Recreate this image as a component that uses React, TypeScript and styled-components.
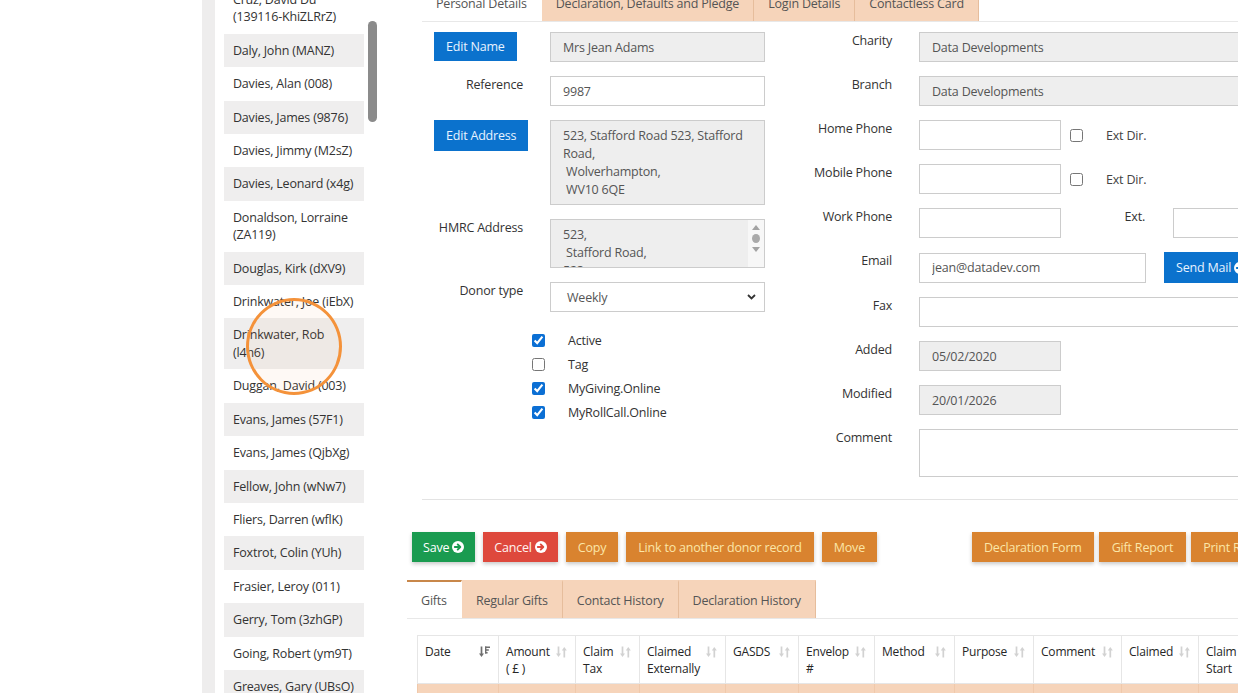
import React from "react";
import styled, { createGlobalStyle } from "styled-components";

const GlobalStyle = createGlobalStyle`
  html, body {
    margin: 0;
    padding: 0;
    background: #ffffff;
  }
  body {
    font-family: "Open Sans", "Liberation Sans", sans-serif;
    font-size: 12.5px;
    letter-spacing: -0.2px;
    color: #333333;
    overflow: hidden;
  }
  * {
    box-sizing: border-box;
  }
`;

const peach = "#f6d4ba";
const peachLine = "#e6bd9c";

const Page = styled.div`
  position: relative;
  display: flex;
  align-items: flex-start;
  width: 1238px;
  height: 693px;
  overflow: hidden;
`;

const BlankSide = styled.div`
  width: 202px;
  flex-shrink: 0;
`;

const Gutter = styled.div`
  width: 13px;
  height: 693px;
  margin-right: 9px;
  flex-shrink: 0;
  background: #eeeded;
`;

const DonorList = styled.ul`
  list-style: none;
  margin: -17px 0 0 0;
  padding: 0;
  width: 140px;
  flex-shrink: 0;
`;

const DonorItem = styled.li<{ $shade: boolean }>`
  padding: 8px 9px;
  line-height: 17.4px;
  white-space: nowrap;
  background: ${(p) => (p.$shade ? "#efeeee" : "#ffffff")};
`;

const ScrollTrack = styled.div`
  width: 9px;
  margin-left: 4px;
  padding-top: 21px;
  flex-shrink: 0;
`;

const ScrollThumb = styled.div`
  height: 101px;
  border-radius: 5px;
  background: #8b8b8b;
`;

const Main = styled.div`
  width: 900px;
  margin-left: 30px;
  flex-shrink: 0;
  display: flex;
  flex-direction: column;
`;

const TabBar = styled.div<{ $inset: number; $top: number }>`
  display: flex;
  height: 39px;
  margin-left: ${(p) => p.$inset}px;
  margin-top: ${(p) => p.$top}px;
  border-bottom: 1px solid #e8e8e8;
`;

const Tab = styled.div<{ $active?: boolean }>`
  display: flex;
  align-items: center;
  padding: 0 14px;
  color: #555555;
  white-space: nowrap;
  background: ${(p) => (p.$active ? "#ffffff" : peach)};
  border-top: 2px solid ${(p) => (p.$active ? "#c8874a" : peach)};
  border-right: 1px solid ${(p) => (p.$active ? "#ffffff" : peachLine)};
`;

const FormPanel = styled.div`
  display: flex;
  margin-left: 15px;
  padding: 10px 0 22px 0;
  border-bottom: 1px solid #e3e3e3;
`;

const Column = styled.div<{ $width: number }>`
  width: ${(p) => p.$width}px;
  flex-shrink: 0;
  display: flex;
  flex-direction: column;
`;

const FieldRow = styled.div<{ $label: number; $last?: boolean }>`
  display: grid;
  grid-template-columns: ${(p) => p.$label}px auto;
  align-items: start;
  margin-bottom: ${(p) => (p.$last ? 0 : 14)}px;
`;

const Label = styled.div`
  padding: 0 27px 0 0;
  line-height: 17px;
  text-align: right;
  color: #333333;
`;

const ButtonCell = styled.div`
  padding-left: 12px;
`;

const Inline = styled.div`
  display: flex;
  align-items: center;
`;

const TextInput = styled.input<{ $width: number; $ro?: boolean }>`
  width: ${(p) => p.$width}px;
  height: 30px;
  margin: 0;
  padding: 0 12px;
  border: 1px solid #cccccc;
  border-radius: 0;
  background: ${(p) => (p.$ro ? "#eeeeee" : "#ffffff")};
  color: #555555;
  font: inherit;
  letter-spacing: inherit;
  outline: none;
`;

const TextBlock = styled.div<{ $width: number; $height: number; $ro?: boolean }>`
  display: flex;
  width: ${(p) => p.$width}px;
  height: ${(p) => p.$height}px;
  border: 1px solid #cccccc;
  background: ${(p) => (p.$ro ? "#eeeeee" : "#ffffff")};
  color: #555555;
  overflow: hidden;
`;

const BlockText = styled.div`
  flex: 1;
  padding: 6px 12px;
  line-height: 18px;
  white-space: pre;
`;

const MiniRail = styled.div`
  width: 16px;
  display: flex;
  flex-direction: column;
  align-items: center;
  padding-top: 5px;
  gap: 4px;
  background: #f7f7f7;
`;

const RailDot = styled.div`
  width: 8px;
  height: 9px;
  border-radius: 50%;
  background: #a9a9a9;
`;

const SelectBox = styled.div`
  display: flex;
  align-items: center;
  justify-content: space-between;
  width: 215px;
  height: 30px;
  padding: 0 8px 0 16px;
  border: 1px solid #cccccc;
  color: #555555;
`;

const CheckList = styled.div`
  display: flex;
  flex-direction: column;
  padding-top: 2px;
`;

const CheckRow = styled.label`
  display: flex;
  align-items: center;
  gap: 23px;
  height: 24px;
  padding-left: 110px;
  color: #333333;
`;

const Check = styled.input.attrs({ type: "checkbox" })<{ $ml?: number }>`
  width: 13px;
  height: 13px;
  margin: 0 0 0 ${(p) => p.$ml ?? 0}px;
  accent-color: #0b6fd4;
`;

const SideText = styled.span<{ $ml: number }>`
  margin-left: ${(p) => p.$ml}px;
  color: #444444;
`;

const ExtLabel = styled.div`
  width: 84px;
  margin-right: 28px;
  align-self: flex-start;
  line-height: 17px;
  text-align: right;
`;

const tones = {
  green: { bg: "#1a9b50", fg: "#ffffff", shadow: true },
  red: { bg: "#de483c", fg: "#fff3f0", shadow: true },
  orange: { bg: "#d9832f", fg: "#fbe6a8", shadow: true },
  blue: { bg: "#0b72cd", fg: "#e8f3ff", shadow: false },
};

type Tone = keyof typeof tones;

const ActionButton = styled.button<{ $tone: Tone; $h?: number; $pad?: number }>`
  display: inline-flex;
  align-items: center;
  gap: 3px;
  height: ${(p) => p.$h ?? 30}px;
  padding: 0 ${(p) => p.$pad ?? 12}px;
  border: none;
  border-radius: 0;
  font: inherit;
  letter-spacing: inherit;
  white-space: nowrap;
  background: ${(p) => tones[p.$tone].bg};
  color: ${(p) => tones[p.$tone].fg};
  box-shadow: ${(p) =>
    tones[p.$tone].shadow ? "0 2px 4px rgba(0, 0, 0, 0.22)" : "none"};
`;

const ButtonBar = styled.div`
  display: flex;
  margin: 32px 0 0 5px;
`;

const ButtonGroup = styled.div<{ $gap: number; $ml?: number }>`
  display: flex;
  gap: ${(p) => p.$gap}px;
  margin-left: ${(p) => p.$ml ?? 0}px;
`;

const GiftTable = styled.table<{ $width: number }>`
  width: ${(p) => p.$width}px;
  margin: 16px 0 0 10px;
  border-collapse: collapse;
  table-layout: fixed;
`;

const TableCol = styled.col<{ $w: number }>`
  width: ${(p) => p.$w}px;
`;

const HeadCell = styled.th`
  height: 48px;
  padding: 7px 8px 6px 7px;
  border: 1px solid #e6e6e6;
  text-align: left;
  vertical-align: top;
  font-weight: normal;
  font-size: 12px;
  line-height: 17px;
  color: #262626;
  overflow: hidden;
`;

const HeadInner = styled.div`
  display: flex;
  justify-content: space-between;
  align-items: flex-start;
  gap: 2px;
`;

const SortGlyph = styled.span`
  padding-top: 3px;
  flex-shrink: 0;
  display: flex;
`;

const DataCell = styled.td`
  height: 34px;
  background: ${peach};
  border-left: 1px solid #f0c9ab;
`;

const CursorRing = styled.div`
  position: absolute;
  left: 246px;
  top: 298px;
  width: 96px;
  height: 97px;
  border: 3.5px solid #f4923a;
  border-radius: 50%;
  background: rgba(244, 160, 90, 0.06);
  pointer-events: none;
`;

const CircleArrow = ({ color }: { color: string }) => (
  <svg width="12" height="12" viewBox="0 0 12 12">
    <circle cx="6" cy="6" r="6" fill="#ffffff" />
    <path
      d="M2.8 6h5.2M5.7 3.4L8.3 6 5.7 8.6"
      stroke={color}
      strokeWidth="1.9"
      fill="none"
      strokeLinecap="round"
      strokeLinejoin="round"
    />
  </svg>
);

const SortIcon = ({ active }: { active?: boolean }) =>
  active ? (
    <svg width="11" height="12" viewBox="0 0 11 12">
      <path d="M2.5 0.5v8" stroke="#6f6f6f" strokeWidth="1.7" />
      <path d="M0 7.5h5L2.5 11z" fill="#6f6f6f" />
      <path d="M6 1.2h5M6 4h3.8M6 6.8h2.6" stroke="#6f6f6f" strokeWidth="1.5" />
      <path d="M6.7 0.5v7" stroke="#6f6f6f" strokeWidth="1.4" />
    </svg>
  ) : (
    <svg width="11" height="12" viewBox="0 0 11 12">
      <path d="M2.5 0.5v8" stroke="#d2d2d2" strokeWidth="1.7" />
      <path d="M0 7.5h5L2.5 11z" fill="#d2d2d2" />
      <path d="M8.3 11.5v-8" stroke="#d2d2d2" strokeWidth="1.7" />
      <path d="M5.8 4.5h5L8.3 1z" fill="#d2d2d2" />
    </svg>
  );

const Chevron = () => (
  <svg width="9" height="6" viewBox="0 0 9 6">
    <path d="M1 1l3.5 3.5L8 1" stroke="#333333" strokeWidth="1.8" fill="none" />
  </svg>
);

const RailArrow = ({ up }: { up?: boolean }) => (
  <svg width="8" height="5" viewBox="0 0 8 5">
    <path d={up ? "M0 5L4 0l4 5z" : "M0 0h8L4 5z"} fill="#a3a3a3" />
  </svg>
);

const donors: string[][] = [
  ["Cruz, David Du", "(139116-KhiZLRrZ)"],
  ["Daly, John (MANZ)"],
  ["Davies, Alan (008)"],
  ["Davies, James (9876)"],
  ["Davies, Jimmy (M2sZ)"],
  ["Davies, Leonard (x4g)"],
  ["Donaldson, Lorraine", "(ZA119)"],
  ["Douglas, Kirk (dXV9)"],
  ["Drinkwater, Joe (iEbX)"],
  ["Drinkwater, Rob", "(l4h6)"],
  ["Duggan, David (003)"],
  ["Evans, James (57F1)"],
  ["Evans, James (QjbXg)"],
  ["Fellow, John (wNw7)"],
  ["Fliers, Darren (wflK)"],
  ["Foxtrot, Colin (YUh)"],
  ["Frasier, Leroy (011)"],
  ["Gerry, Tom (3zhGP)"],
  ["Going, Robert (ym9T)"],
  ["Greaves, Gary (UBsO)"],
];

const giftColumns: { lines: string[]; w: number; active?: boolean }[] = [
  { lines: ["Date"], w: 81, active: true },
  { lines: ["Amount", "( £ )"], w: 77 },
  { lines: ["Claim", "Tax"], w: 64 },
  { lines: ["Claimed", "Externally"], w: 86 },
  { lines: ["GASDS"], w: 73 },
  { lines: ["Envelop", "#"], w: 76 },
  { lines: ["Method"], w: 80 },
  { lines: ["Purpose"], w: 79 },
  { lines: ["Comment"], w: 88 },
  { lines: ["Claimed"], w: 77 },
  { lines: ["Claim", "Start"], w: 80 },
];

const tableWidth = giftColumns.reduce((s, c) => s + c.w, 0);

const checks = [
  { label: "Active", on: true },
  { label: "Tag", on: false },
  { label: "MyGiving.Online", on: true },
  { label: "MyRollCall.Online", on: true },
];

const App: React.FC = () => {
  return (
    <Page>
      <GlobalStyle />
      <BlankSide />
      <Gutter />
      <DonorList>
        {donors.map((lines, i) => (
          <DonorItem key={lines.join()} $shade={i % 2 === 1}>
            {lines.map((l, j) => (
              <React.Fragment key={l}>
                {j > 0 && <br />}
                {l}
              </React.Fragment>
            ))}
          </DonorItem>
        ))}
      </DonorList>
      <ScrollTrack>
        <ScrollThumb />
      </ScrollTrack>

      <Main>
        <TabBar $inset={15} $top={-17}>
          <Tab $active>Personal Details</Tab>
          <Tab>Declaration, Defaults and Pledge</Tab>
          <Tab>Login Details</Tab>
          <Tab>Contactless Card</Tab>
        </TabBar>

        <FormPanel>
          <Column $width={343}>
            <FieldRow $label={128}>
              <ButtonCell>
                <ActionButton $tone="blue" $h={29}>Edit Name</ActionButton>
              </ButtonCell>
              <TextInput $width={215} $ro readOnly value="Mrs Jean Adams" />
            </FieldRow>
            <FieldRow $label={128}>
              <Label>Reference</Label>
              <TextInput $width={215} readOnly value="9987" />
            </FieldRow>
            <FieldRow $label={128}>
              <ButtonCell>
                <ActionButton $tone="blue" $h={31}>Edit Address</ActionButton>
              </ButtonCell>
              <TextBlock $width={215} $height={85} $ro>
                <BlockText>
                  {"523, Stafford Road 523, Stafford\nRoad,\n Wolverhampton,\n WV10 6QE"}
                </BlockText>
              </TextBlock>
            </FieldRow>
            <FieldRow $label={128}>
              <Label>HMRC Address</Label>
              <TextBlock $width={215} $height={49} $ro>
                <BlockText>{"523,\n Stafford Road,\n523,"}</BlockText>
                <MiniRail>
                  <RailArrow up />
                  <RailDot />
                  <RailArrow />
                </MiniRail>
              </TextBlock>
            </FieldRow>
            <FieldRow $label={128}>
              <Label>Donor type</Label>
              <SelectBox>
                Weekly
                <Chevron />
              </SelectBox>
            </FieldRow>
            <CheckList>
              {checks.map((c) => (
                <CheckRow key={c.label}>
                  <Check readOnly checked={c.on} />
                  {c.label}
                </CheckRow>
              ))}
            </CheckList>
          </Column>

          <Column $width={520}>
            <FieldRow $label={154}>
              <Label>Charity</Label>
              <TextInput $width={360} $ro readOnly value="Data Developments" />
            </FieldRow>
            <FieldRow $label={154}>
              <Label>Branch</Label>
              <TextInput $width={360} $ro readOnly value="Data Developments" />
            </FieldRow>
            <FieldRow $label={154}>
              <Label>Home Phone</Label>
              <Inline>
                <TextInput $width={142} readOnly value="" />
                <Check $ml={9} readOnly checked={false} />
                <SideText $ml={23}>Ext Dir.</SideText>
              </Inline>
            </FieldRow>
            <FieldRow $label={154}>
              <Label>Mobile Phone</Label>
              <Inline>
                <TextInput $width={142} readOnly value="" />
                <Check $ml={9} readOnly checked={false} />
                <SideText $ml={23}>Ext Dir.</SideText>
              </Inline>
            </FieldRow>
            <FieldRow $label={154}>
              <Label>Work Phone</Label>
              <Inline>
                <TextInput $width={142} readOnly value="" />
                <ExtLabel>Ext.</ExtLabel>
                <TextInput $width={120} readOnly value="" />
              </Inline>
            </FieldRow>
            <FieldRow $label={154}>
              <Label>Email</Label>
              <Inline>
                <TextInput $width={227} readOnly value="jean@datadev.com" />
                <SideText $ml={18}>
                  <ActionButton $tone="blue" $h={31}>
                    Send Mail <CircleArrow color="#0b72cd" />
                  </ActionButton>
                </SideText>
              </Inline>
            </FieldRow>
            <FieldRow $label={154}>
              <Label>Fax</Label>
              <TextInput $width={360} readOnly value="" />
            </FieldRow>
            <FieldRow $label={154}>
              <Label>Added</Label>
              <TextInput $width={142} $ro readOnly value="05/02/2020" />
            </FieldRow>
            <FieldRow $label={154}>
              <Label>Modified</Label>
              <TextInput $width={142} $ro readOnly value="20/01/2026" />
            </FieldRow>
            <FieldRow $label={154} $last>
              <Label>Comment</Label>
              <TextBlock $width={360} $height={48} />
            </FieldRow>
          </Column>
        </FormPanel>

        <ButtonBar>
          <ButtonGroup $gap={8}>
            <ActionButton $tone="green" $pad={11}>
              Save <CircleArrow color="#1a9b50" />
            </ActionButton>
            <ActionButton $tone="red" $pad={11}>
              Cancel <CircleArrow color="#de483c" />
            </ActionButton>
            <ActionButton $tone="orange">Copy</ActionButton>
            <ActionButton $tone="orange">Link to another donor record</ActionButton>
            <ActionButton $tone="orange">Move</ActionButton>
          </ButtonGroup>
          <ButtonGroup $gap={5} $ml={95}>
            <ActionButton $tone="orange">Declaration Form</ActionButton>
            <ActionButton $tone="orange" $pad={13}>Gift Report</ActionButton>
            <ActionButton $tone="orange">Print Receipt</ActionButton>
          </ButtonGroup>
        </ButtonBar>

        <TabBar $inset={0} $top={18}>
          <Tab $active>Gifts</Tab>
          <Tab>Regular Gifts</Tab>
          <Tab>Contact History</Tab>
          <Tab>Declaration History</Tab>
        </TabBar>

        <GiftTable $width={tableWidth}>
          <colgroup>
            {giftColumns.map((c) => (
              <TableCol key={c.lines.join()} $w={c.w} />
            ))}
          </colgroup>
          <thead>
            <tr>
              {giftColumns.map((c) => (
                <HeadCell key={c.lines.join()}>
                  <HeadInner>
                    <span>
                      {c.lines.map((l, j) => (
                        <React.Fragment key={l}>
                          {j > 0 && <br />}
                          {l}
                        </React.Fragment>
                      ))}
                    </span>
                    <SortGlyph>
                      <SortIcon active={c.active} />
                    </SortGlyph>
                  </HeadInner>
                </HeadCell>
              ))}
            </tr>
          </thead>
          <tbody>
            <tr>
              {giftColumns.map((c) => (
                <DataCell key={c.lines.join()} />
              ))}
            </tr>
          </tbody>
        </GiftTable>
      </Main>

      <CursorRing />
    </Page>
  );
};

export default App;
